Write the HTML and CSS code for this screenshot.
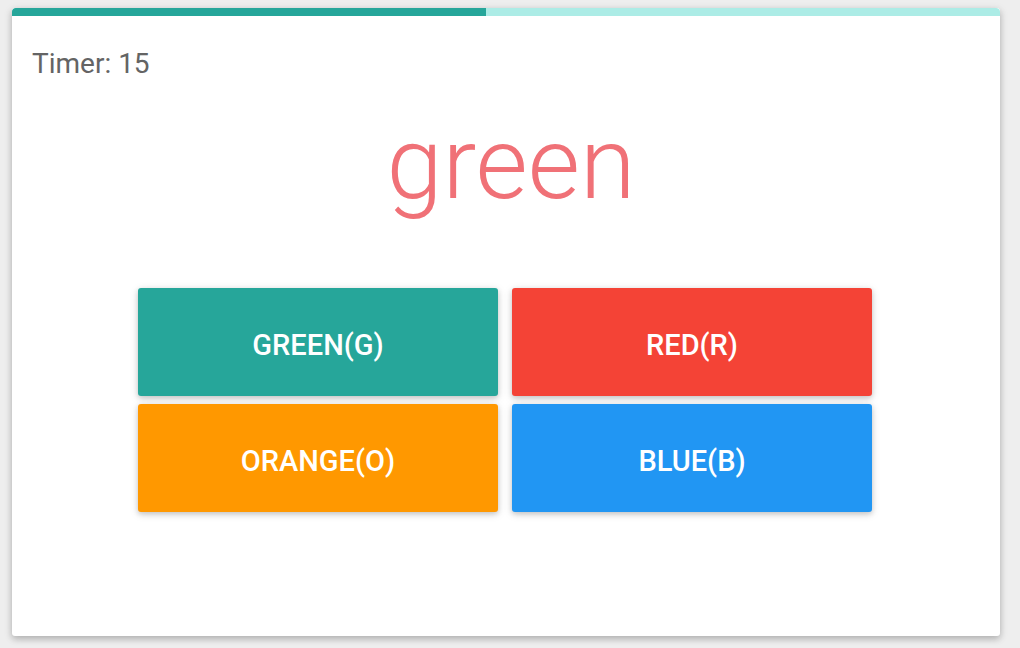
FILE: index.html
```html
<!DOCTYPE html>
<html>
<head>
<meta charset="utf-8">
<link rel="stylesheet" href="styles.css">
</head>
<body>
<div class="card">
  <div class="progress"><div class="determinate" style="width:48%"></div></div>
  <div class="timer">Timer: 15</div>
  <div class="word">green</div>
  <div class="grid">
    <button class="btn green">GREEN(G)</button>
    <button class="btn red">RED(R)</button>
    <button class="btn orange">ORANGE(O)</button>
    <button class="btn blue">BLUE(B)</button>
  </div>
</div>
</body>
</html>
```
FILE: styles.css
```css
html, body {
  margin: 0;
  background: #eeeeee;
  font-family: Roboto, "Noto Sans", sans-serif;
}
body {
  padding: 8px 0 0 12px;
  height: 648px;
  box-sizing: border-box;
}
.card {
  width: 988px;
  height: 628px;
  background: #fff;
  border-radius: 3px;
  box-shadow: 0 3px 6px rgba(0,0,0,0.18), 0 2px 10px rgba(0,0,0,0.12);
  display: flex;
  flex-direction: column;
  overflow: hidden;
}
.progress {
  height: 8px;
  background: #acece6;
  border-radius: 4px 4px 0 0;
  overflow: hidden;
  display: flex;
}
.determinate {
  background: #26a69a;
  height: 100%;
}
.timer {
  margin: 32px 0 0 20px;
  font-size: 28px;
  line-height: 32px;
  color: #646464;
}
.word {
  text-align: center;
  font-weight: 300;
  font-size: 101px;
  line-height: 112px;
  color: #f07177;
  margin-top: 28px;
  padding-left: 10px;
}
.grid {
  display: grid;
  grid-template-columns: 360px 360px;
  column-gap: 14px;
  row-gap: 8px;
  justify-content: center;
  margin: 68px 2px 0 0;
}
.btn {
  height: 108px;
  border: none;
  border-radius: 3px;
  color: #fff;
  font-family: Roboto, "Noto Sans", sans-serif;
  font-size: 29px;
  font-weight: 500;
  box-shadow: 0 2px 5px rgba(0,0,0,0.16), 0 2px 10px rgba(0,0,0,0.12);
  padding: 5px 0 0 0;
}
.green { background: #26a69a; }
.red { background: #f44336; }
.orange { background: #ff9800; }
.blue { background: #2196f3; }
```
